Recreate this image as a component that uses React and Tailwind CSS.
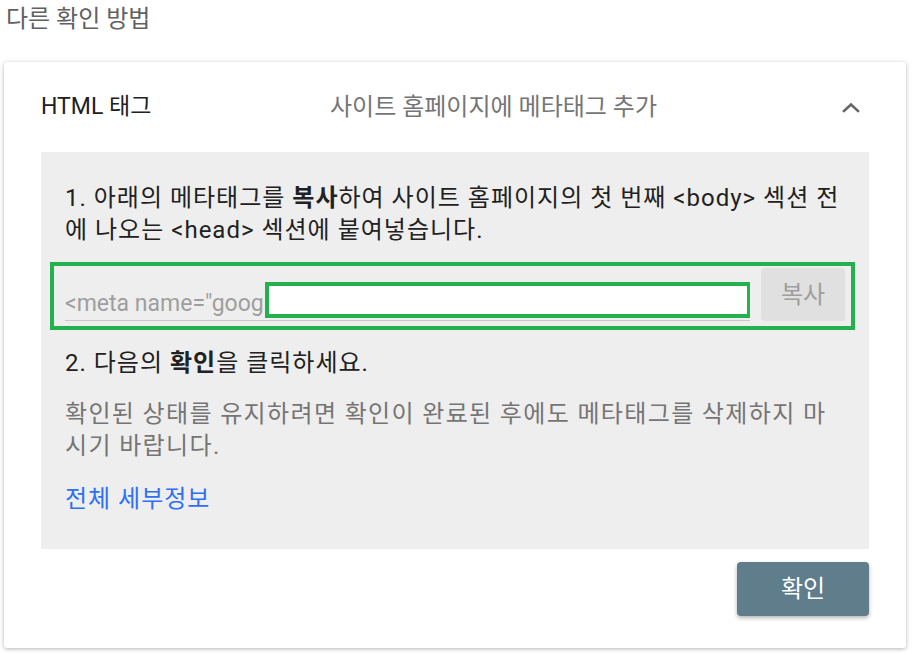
import React from 'react'

const FONT = { fontFamily: 'Roboto, "Noto Sans CJK KR", sans-serif' }

export default function App() {
  return (
    <div className="min-h-[653px] w-[916px] bg-white" style={FONT}>
      <div className="px-[6px] pt-[3px] h-[62px] text-[24px] leading-[32px] text-[#616161]">다른 확인 방법</div>

      <div className="ml-[4px] w-[902px] rounded-[3px] bg-white shadow-[0_1px_4px_rgba(0,0,0,0.3)]">
        {/* Header */}
        <div className="flex h-[90px] items-center pl-[37px] pr-[46px]">
          <div className="w-[289px] text-[23px] text-[#212121]">HTML 태그</div>
          <div className="flex-1 text-[24px] text-[#757575]">사이트 홈페이지에 메타태그 추가</div>
          <svg width="18" height="11" viewBox="0 0 18 11" fill="none" stroke="#666666" strokeWidth="2.6" strokeLinecap="square">
            <polyline points="2,9 9,2.5 16,9" />
          </svg>
        </div>

        {/* Body panel */}
        <div className="mx-[37px] bg-[#eeeeee] pt-[30px] pb-[34px] break-all tracking-[1px]">
          <p className="px-[24px] text-[24px] leading-[32px] text-[#212121]">
            1. 아래의 메타태그를 <b className="font-bold">복사</b>하여 사이트 홈페이지의 첫 번째 &lt;body&gt; 섹션 전에 나오는 &lt;head&gt; 섹션에 붙여넣습니다.
          </p>

          <div className="ml-[9px] mr-[14px] mt-[16px] flex items-stretch gap-[11px] border-[4px] border-[#22b14c] pl-[11px] pr-[6px] pt-[2px] pb-[5px] tracking-normal">
            <div className="relative flex flex-1 items-end overflow-hidden">
              <div className="w-full truncate border-b border-[#c8c8c8] pb-[1px] text-[23px] leading-[30px] text-[#9e9e9e]">
                &lt;meta name="google-site-verification" content="A1b2C3d4E5f6G7h8I9j0KlMnOpQrStUvWxYz" /&gt;
              </div>
              <div className="absolute left-[200px] right-[-1px] bottom-[3px] h-[36px] border-[4px] border-[#22b14c] bg-white" />
            </div>
            <button className="h-[53px] w-[84px] rounded-[4px] bg-[#e0e0e0] text-[24px] text-[#9e9e9e]">복사</button>
          </div>

          <p className="mt-[17px] px-[24px] text-[24px] leading-[32px] text-[#212121]">
            2. 다음의 <b className="font-bold">확인</b>을 클릭하세요.
          </p>
          <p className="mt-[19px] px-[24px] text-[24px] leading-[32px] tracking-[1.35px] text-[#757575]">
            확인된 상태를 유지하려면 확인이 완료된 후에도 메타태그를 삭제하지 마시기 바랍니다.
          </p>
          <a className="mt-[21px] block px-[24px] text-[24px] leading-[32px] text-[#2d6ff7]" href="#">전체 세부정보</a>
        </div>

        {/* Footer */}
        <div className="flex justify-end pr-[37px] pt-[13px] pb-[32px]">
          <button className="h-[54px] w-[132px] rounded-[4px] bg-[#607d8b] text-[24px] text-white shadow-[0_2px_4px_rgba(0,0,0,0.3)]">확인</button>
        </div>
      </div>
    </div>
  )
}
